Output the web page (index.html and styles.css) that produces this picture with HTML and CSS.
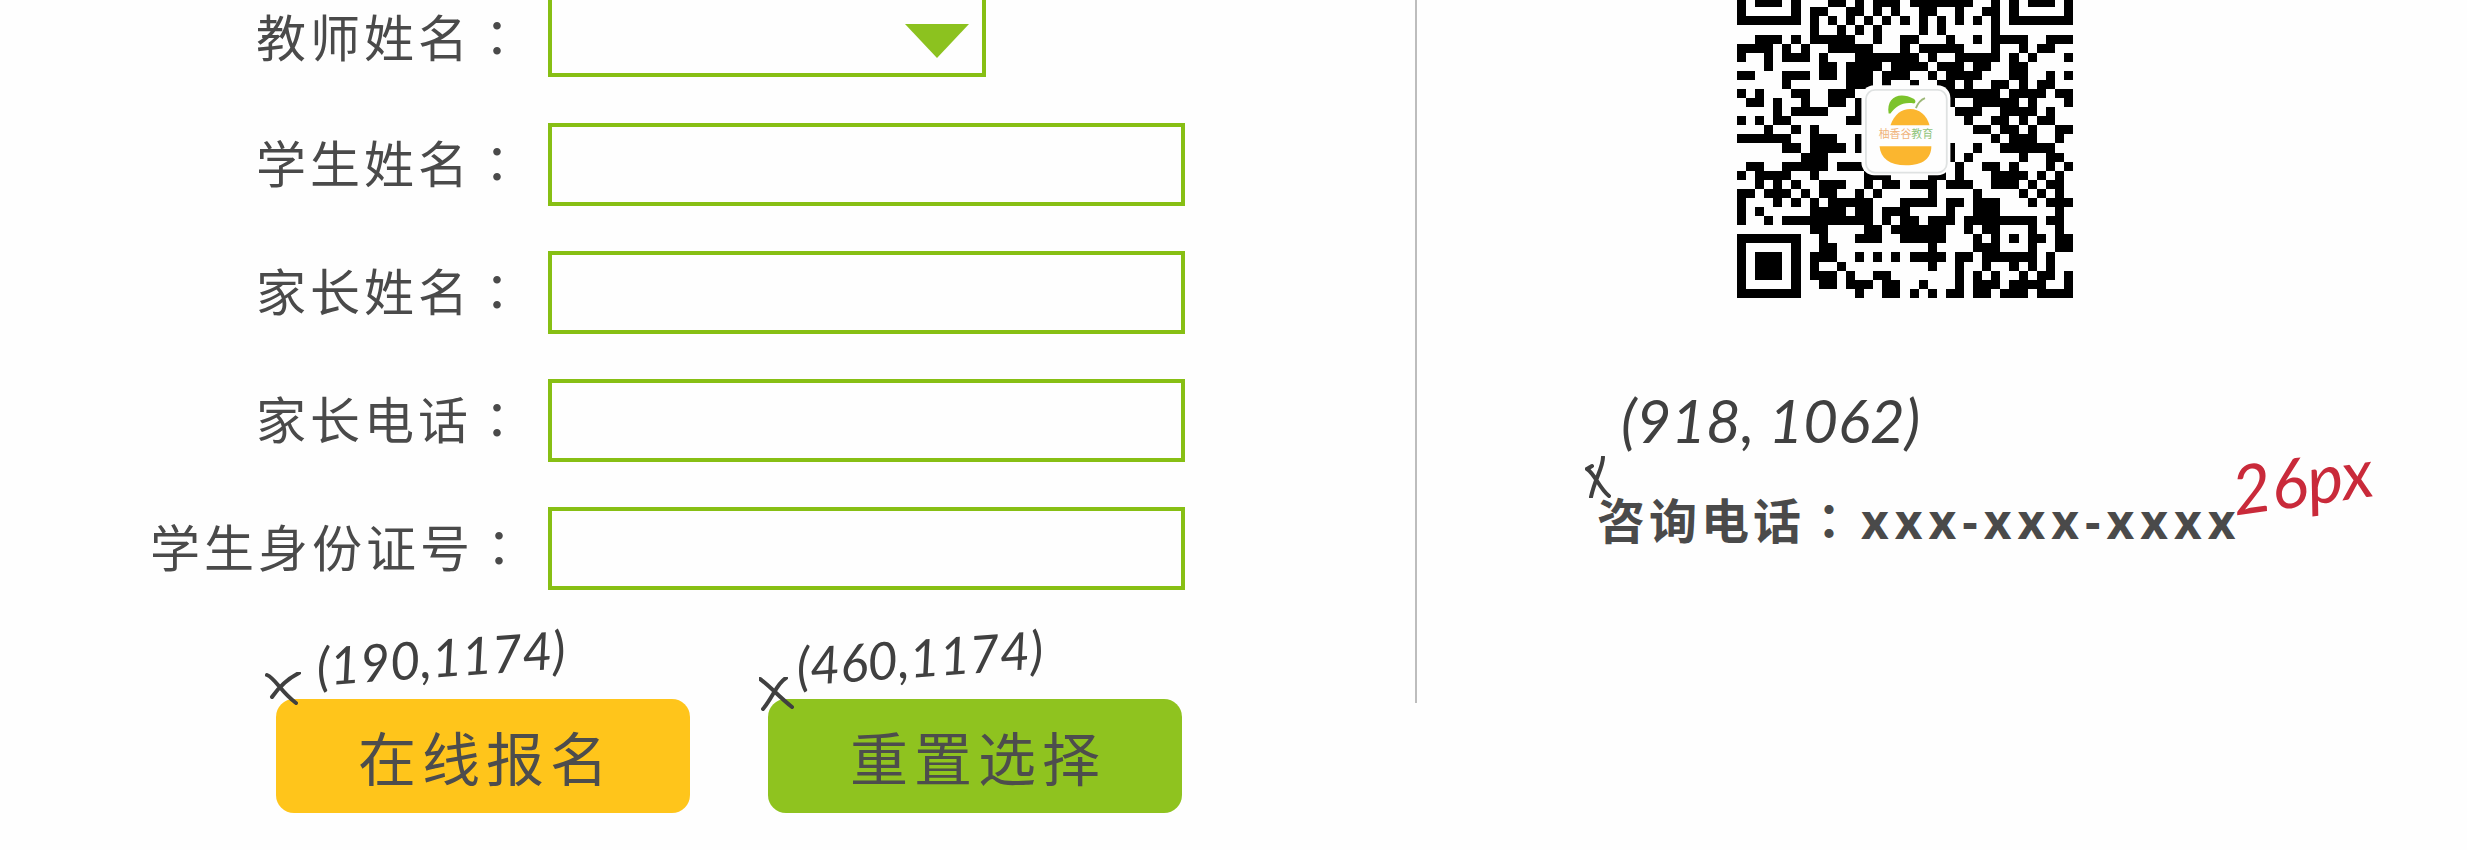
FILE: index.html
```html
<!DOCTYPE html>
<html lang="zh-CN">
<head>
<meta charset="utf-8">
<meta name="viewport" content="width=device-width, initial-scale=1">
<title>在线报名</title>
<link rel="stylesheet" href="styles.css">
</head>
<body>
<main class="page">
  <form class="signup">
    <div class="fields">
      <label class="label" for="teacher">教师姓名<span class="colon" lang="ja">：</span></label>
      <div class="picker">
        <select class="select" id="teacher"><option></option></select>
        <svg class="arrow" viewBox="0 0 64 34" aria-hidden="true"><path d="M0 0H64L32 34Z"/></svg>
      </div>
      <label class="label" for="student">学生姓名<span class="colon" lang="ja">：</span></label>
      <input class="input" id="student" type="text">
      <label class="label" for="parent">家长姓名<span class="colon" lang="ja">：</span></label>
      <input class="input" id="parent" type="text">
      <label class="label" for="phone">家长电话<span class="colon" lang="ja">：</span></label>
      <input class="input" id="phone" type="tel">
      <label class="label" for="idcard">学生身份证号<span class="colon" lang="ja">：</span></label>
      <input class="input" id="idcard" type="text">
    </div>
    <div class="actions">
      <div class="action">
        <button class="button button-submit" type="submit">在线报名</button>
        <svg class="mark mark-submit" viewBox="0 0 36 34" aria-hidden="true"><path d="M2 3C10 6 16 20 31 31M34 1C22 7 14 15 7 25"/></svg>
        <span class="note note-submit">(190,1174)</span>
      </div>
      <div class="action">
        <button class="button button-reset" type="reset">重置选择</button>
        <svg class="mark mark-reset" viewBox="0 0 36 34" aria-hidden="true"><path d="M1 2C10 8 20 20 33 30M27 1C18 6 14 20 4 32"/></svg>
        <span class="note note-reset">(460,1174)</span>
      </div>
    </div>
  </form>
  <aside class="contact">
    <svg class="qr" viewBox="0 0 370 328" role="img" aria-label="二维码">
      <path id="modules"/>
      <rect x="137" y="94" width="98" height="99" rx="14" fill="#fefefe"/>
      <rect x="142" y="99" width="89" height="91" rx="10" fill="#fefefe" stroke="#dfe2e2" stroke-width="2"/>
      <path d="M167 125C164 107 179 100 195 109C197 111 197 113 195 114C182 112 175 117 169 125Z" fill="#7cc32c"/>
      <path d="M197 119C199 114 202 110 207 108" fill="none" stroke="#9db878" stroke-width="2"/>
      <path d="M169 138C173 126 181 120 191 120C201 120 209 127 212 138Z" fill="#fbb62f"/>
      <path d="M157 161H214C214 174 205 182 186 182C168 182 158 174 157 161Z" fill="#fbb62f"/>
      <text class="brand" x="156" y="152"><tspan fill="#f0b47c">柚香谷</tspan><tspan fill="#8fc47a">教育</tspan></text>
    </svg>
    <p class="hotline">咨询电话<span class="colon" lang="ja">：</span><span class="number">xxx-xxx-xxxx</span>
      <svg class="mark mark-hotline" viewBox="0 0 26 42" aria-hidden="true"><path d="M7 10L2 13C10 18 14 32 24 40M18 1C18 12 10 22 6 41"/></svg>
      <span class="note note-hotline">(918, 1062)</span>
      <span class="note note-size">26px</span>
    </p>
  </aside>
</main>
<script src="qr.js"></script>
</body>
</html>
```
FILE: styles.css
```css
* {
  box-sizing: border-box;
}

body {
  margin: 0;
  background: #fefefe;
  color: #4a4a4a;
  font-family: "Noto Sans CJK SC", sans-serif;
}

.page {
  display: grid;
  grid-template-columns: 1417fr 1050fr;
  align-items: start;
  overflow: hidden;
}

.signup {
  padding-left: 150px;
}

.fields {
  display: grid;
  grid-template-columns: 398px 637px;
  grid-template-rows: 78px;
  grid-auto-rows: 83px;
  row-gap: 45px;
  align-items: center;
}

.label {
  padding: 0 22px 8px 0;
  text-align: right;
  font-size: 50px;
  line-height: 72px;
  letter-spacing: 4px;
  white-space: nowrap;
}

.colon {
  font-family: "Noto Sans CJK JP", sans-serif;
}

.input,
.select {
  width: 100%;
  height: 83px;
  padding: 0 20px;
  border: 4px solid #87bf14;
  border-radius: 0;
  background: #fefefe;
  color: inherit;
  font: inherit;
  font-size: 50px;
}

.picker {
  position: relative;
  align-self: start;
  width: 438px;
}

.select {
  display: block;
  height: 77px;
  border-top: 0;
  appearance: none;
}

.arrow {
  position: absolute;
  right: 17px;
  top: 24px;
  width: 64px;
  fill: #8cc21f;
  pointer-events: none;
}

.actions {
  display: flex;
  gap: 78px;
  padding: 109px 0 36px 126px;
}

.action {
  position: relative;
}

.button {
  display: block;
  width: 414px;
  height: 114px;
  padding: 0 0 0 6px;
  border: 0;
  border-radius: 18px;
  color: #4d4d4d;
  font: inherit;
  font-size: 58px;
  letter-spacing: 6px;
}

.button-submit {
  background: #ffc51b;
}

.button-reset {
  background: #8fc31f;
}

.contact {
  height: 703px;
  padding-left: 180px;
  border-left: 2px solid #bdbdbd;
  margin-left: -2px;
}

.qr {
  display: block;
  width: 336px;
  margin-left: 140px;
}

.brand {
  font-family: "Noto Sans CJK SC", sans-serif;
  font-size: 12px;
}

.hotline {
  position: relative;
  width: max-content;
  margin: 184px 0 0;
  font-size: 48px;
  font-weight: 700;
  line-height: 72px;
  letter-spacing: 4px;
}

.number {
  margin-left: 4px;
  font-family: "Open Sans", sans-serif;
  letter-spacing: 6px;
}

.note {
  position: absolute;
  color: #404040;
  font-family: "Lato", sans-serif;
  font-style: italic;
  font-weight: 400;
  line-height: 72px;
  letter-spacing: 0;
  white-space: nowrap;
  pointer-events: none;
}

.note-submit,
.note-reset {
  left: 40px;
  top: -78px;
  font-size: 52px;
  transform: rotate(-4deg);
}

.note-reset {
  left: 28px;
}

.note-hotline {
  left: 24px;
  top: -98px;
  font-size: 60px;
}

.note-size {
  left: 634px;
  top: -38px;
  color: #c92a3a;
  font-size: 68px;
  transform: rotate(-8deg);
}

.mark {
  position: absolute;
  width: 36px;
  fill: none;
  stroke: #404040;
  stroke-width: 4;
  stroke-linecap: round;
  pointer-events: none;
}

.mark-submit {
  left: -11px;
  top: -27px;
}

.mark-reset {
  left: -9px;
  top: -22px;
}

.mark-hotline {
  left: -12px;
  top: -26px;
  width: 26px;
}
```
FILE: qr.js
```javascript
// Module rows of the code; each row is 37 cells, split in two for reading.
const rows = [
  "101110100011010111 0111111100101011101",
  "100000101100110101 0011001001101000001",
  "111111101010101010 1010101010101111111",
  "000000001001010100 0010100000100000000",
  "001110101111100100 1100010010111100111",
  "111101010011111000 1011111000100101100",
  "100101110100011111 1101001111101010001",
  "000100000110111101 1110111011001100000",
  "110001110110111011 1001011110001100101",
  "000001000000111010 0100110100110101100",
  "101000110011100000 0000011111101111011",
  "011010010011010000 0000010011111010001",
  "000010111100010000 0000001110011110100",
  "101011000000110000 0000000100110101100",
  "000100101000000000 0000000011011010011",
  "111111001110010000 0000000000101110010",
  "000001101111010000 0000010010011111100",
  "000000011100000000 0000010100000100110",
  "011001111101110000 0000001001101000101",
  "101111001000001110 0001101000111101010",
  "001010100111001011 0111011100111010110",
  "110111010110010100 0001000010000101010",
  "100010101011111000 1111011011100010111",
  "101000001111011011 1000010011100000010",
  "100101111111111010 1101110111111110110",
  "000000001100001101 1111100101100010010",
  "111111100100011100 1111100010101011011",
  "100000100110000000 0001000011100010011",
  "101110101110010101 0111101101111110100",
  "101110101001000000 0001001001001010100",
  "101110101110100110 0000001010100101101",
  "100000100110111011 0010001011101111001",
  "111111100000010011 0101011011011101111"
];

const cell = 10;
const offset = -2;
let path = "";
rows.forEach((row, y) => {
  const bits = row.replace(" ", "");
  for (const run of bits.matchAll(/1+/g)) {
    const width = run[0].length * cell;
    path += `M${run.index * cell} ${y * cell + offset}h${width}v${cell}h-${width}z`;
  }
});
const modules = document.getElementById("modules");
modules.setAttribute("d", path);
modules.setAttribute("shape-rendering", "crispEdges");
```
